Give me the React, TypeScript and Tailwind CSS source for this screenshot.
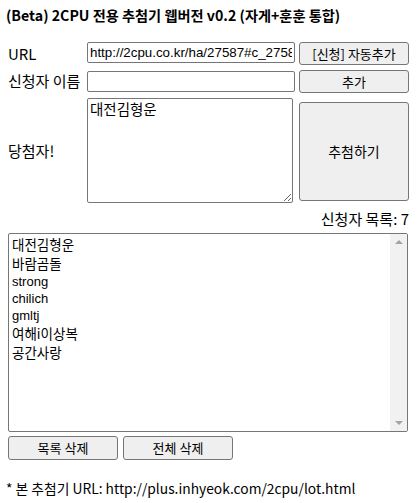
import React from "react";

const ko = "font-['Noto_Sans_CJK_KR',sans-serif]";
const btn =
  "bg-[#efefef] border border-[#767676] rounded-[3px] text-[13px] text-black font-['Noto_Sans_CJK_KR',sans-serif] flex items-center justify-center";

export default function App() {
  const names: [string, boolean][] = [
    ["대전김형운", true],
    ["바람곰돌", true],
    ["strong", false],
    ["chilich", false],
    ["gmltj", false],
    ["여해i이상복", true],
    ["공간사랑", true],
  ];
  return (
    <div className={`w-[419px] h-[503px] bg-white text-black ${ko} relative overflow-hidden`}>
      <div className="pt-[5px] pl-[6px] text-[14.2px] font-bold leading-[20px] whitespace-nowrap">
        (Beta) 2CPU 전용 추첨기 웹버전 v0.2 (자게+훈훈 통합)
      </div>

      <div className="mt-[17px] flex flex-col">
        {/* Row 1 */}
        <div className="flex items-start h-[23px]">
          <div className="w-[87px] pl-[8px] pt-[2px] text-[15px] leading-[20px]">URL</div>
          <input
            readOnly
            defaultValue="http://2cpu.co.kr/ha/27587#c_27587"
            className="w-[208px] h-[21px] border border-[#767676] rounded-[2px] px-[2px] text-[13.33px] font-['Liberation_Sans',sans-serif] outline-none"
          />
          <button className={`${btn} ml-[4px] w-[110px] h-[23px]`}>[신청] 자동추가</button>
        </div>
        {/* Row 2 */}
        <div className="flex items-start h-[23px] mt-[5px]">
          <div className="w-[87px] pl-[8px] pt-[1px] text-[15px] leading-[20px] whitespace-nowrap">신청자 이름</div>
          <input
            readOnly
            className="w-[208px] h-[21px] mt-[1px] border border-[#767676] rounded-[2px] px-[2px] text-[13.33px] outline-none"
          />
          <button className={`${btn} ml-[4px] w-[110px] h-[23px]`}>추가</button>
        </div>
        {/* Row 3 */}
        <div className="flex items-start mt-[5px]">
          <div className="w-[87px] pl-[8px] h-[105px] flex items-center text-[15px] leading-[20px]">당첨자!</div>
          <textarea
            readOnly
            defaultValue="대전김형운"
            className="w-[206px] h-[105px] border border-[#767676] rounded-[2px] px-[2px] py-[1px] text-[14.5px] leading-[18px] font-['Noto_Sans_CJK_KR',sans-serif] outline-none resize"
          />
          <button className={`${btn} text-[14px] ml-[6px] mt-[4px] w-[110px] h-[99px]`}>추첨하기</button>
        </div>
      </div>

      <div className="mt-[6px] pr-[10px] text-right text-[15px] leading-[20px]">신청자 목록: 7</div>

      <div className="mt-[4px] ml-[8px] w-[400px] h-[199px] border border-[#767676] rounded-[2px] flex">
        <div className="flex-1 pl-[3px] pt-[1px] text-[13px] font-['Liberation_Sans','Noto_Sans_CJK_KR',sans-serif]">
          {names.map(([n, k]) => (
            <div
              key={n}
              className={
                k
                  ? "h-[19px] leading-[19px] text-[13.5px] font-['Noto_Sans_CJK_KR',sans-serif]"
                  : "h-[17px] leading-[17px]"
              }
            >
              {n}
            </div>
          ))}
        </div>
        <div className="w-[17px] bg-[#f1f1f1] flex flex-col justify-between items-center py-[6px]">
          <div className="w-0 h-0 border-l-[4px] border-r-[4px] border-b-[4px] border-l-transparent border-r-transparent border-b-[#a3a3a3]" />
          <div className="w-0 h-0 border-l-[4px] border-r-[4px] border-t-[4px] border-l-transparent border-r-transparent border-t-[#a3a3a3]" />
        </div>
      </div>

      <div className="mt-[4px] ml-[8px] flex gap-[5px]">
        <button className={`${btn} text-[13.5px] w-[110px] h-[24px]`}>목록 삭제</button>
        <button className={`${btn} text-[13.5px] w-[110px] h-[24px]`}>전체 삭제</button>
      </div>

      <div className="mt-[18px] pl-[6px] text-[13.8px] leading-[20px] whitespace-nowrap">
        * 본 추첨기 URL: http://plus.inhyeok.com/2cpu/lot.html
      </div>
    </div>
  );
}
